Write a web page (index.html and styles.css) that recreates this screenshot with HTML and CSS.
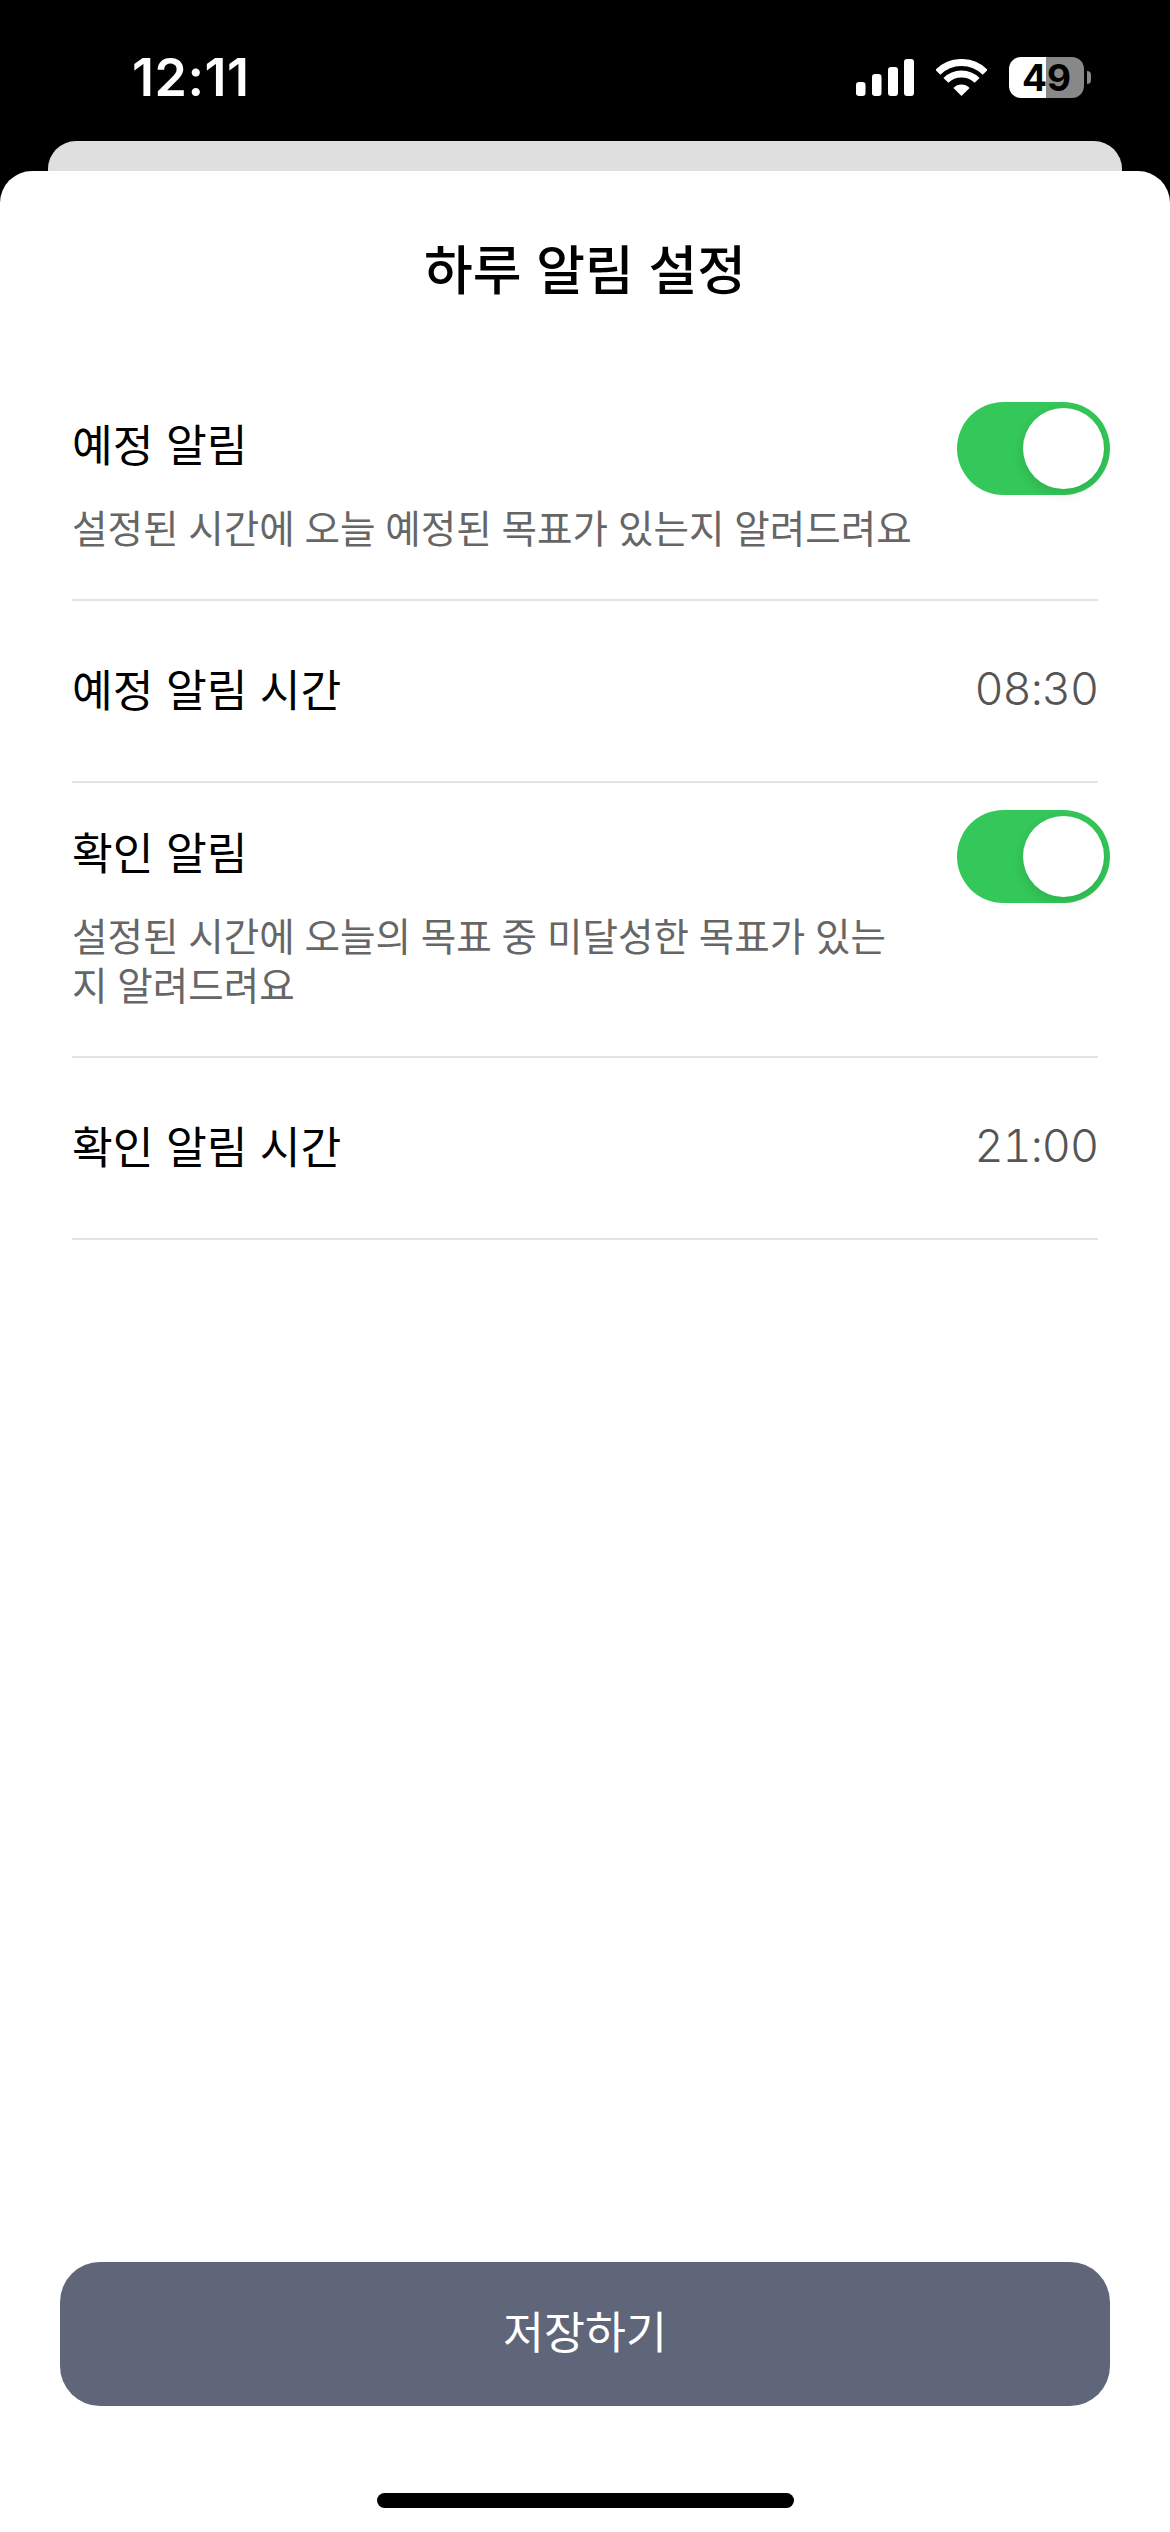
FILE: index.html
```html
<!DOCTYPE html>
<html lang="ko">
<head>
  <meta charset="UTF-8">
  <meta name="viewport" content="width=device-width, initial-scale=1.0">
  <title>하루 알림 설정</title>
  <link rel="stylesheet" href="styles.css">
</head>
<body>
  <!-- Status bar -->
  <div class="status-bar">
    <span class="clock">12:11</span>
    <div class="status-icons">
      <svg class="signal" width="58" height="37" viewBox="0 0 58 37" fill="#fff">
        <rect x="0" y="23" width="9.5" height="14" rx="3"/>
        <rect x="16" y="15" width="9.5" height="22" rx="3"/>
        <rect x="32" y="8" width="10" height="29" rx="3"/>
        <rect x="48" y="0" width="10" height="37" rx="3"/>
      </svg>
      <svg class="wifi" width="51" height="37" viewBox="0 0 51 37" fill="none" stroke="#fff">
        <path d="M1.8 13.3A33.5 33.5 0 0 1 49.2 13.3" stroke-width="7"/>
        <path d="M9.9 21.4A22 22 0 0 1 41.1 21.4" stroke-width="7"/>
        <path d="M25.5 37L17.4 28.9A11.5 11.5 0 0 1 33.6 28.9Z" fill="#fff" stroke="none"/>
      </svg>
      <div class="battery"><span>49</span></div>
      <span class="battery-nub"></span>
    </div>
  </div>
  <div class="back-card"></div>

  <!-- Settings sheet -->
  <div class="sheet">
    <h1 class="sheet-title">하루 알림 설정</h1>
    <div class="setting-list">
      <div class="setting-row">
        <div class="setting-text">
          <div class="setting-label">예정 알림</div>
          <div class="setting-desc">설정된 시간에 오늘 예정된 목표가 있는지 알려드려요</div>
        </div>
        <label class="toggle-switch">
          <input type="checkbox" checked>
          <span class="slider"></span>
        </label>
      </div>
      <div class="time-row">
        <span class="setting-label">예정 알림 시간</span>
        <span class="time-value">08:30</span>
      </div>
      <div class="setting-row">
        <div class="setting-text">
          <div class="setting-label">확인 알림</div>
          <div class="setting-desc">설정된 시간에 오늘의 목표 중 미달성한 목표가 있는지 알려드려요</div>
        </div>
        <label class="toggle-switch">
          <input type="checkbox" checked>
          <span class="slider"></span>
        </label>
      </div>
      <div class="time-row">
        <span class="setting-label">확인 알림 시간</span>
        <span class="time-value">21:00</span>
      </div>
    </div>
    <button class="save-btn">저장하기</button>
    <div class="home-bar"></div>
  </div>
</body>
</html>
```

FILE: styles.css
```css
* {
  box-sizing: border-box;
}
body {
  font-family: "Noto Sans CJK KR", sans-serif;
  margin: 0;
  height: 100vh;
  display: flex;
  flex-direction: column;
  background: #000;
  color: #000;
  overflow: hidden;
}
.status-bar {
  height: 141px;
  flex-shrink: 0;
  display: flex;
  justify-content: space-between;
  padding: 57px 79px 0 132px;
  color: #fff;
}
.clock {
  font-family: Inter, sans-serif;
  font-size: 52px;
  font-weight: 600;
  line-height: 42px;
  letter-spacing: 0.5px;
}
.status-icons {
  display: flex;
  align-items: flex-start;
}
.signal {
  margin-top: 2px;
}
.wifi {
  margin: 2px 22px 0;
}
.battery {
  width: 75px;
  height: 41px;
  border-radius: 12px;
  background: linear-gradient(90deg, #fff 37px, #888 37px);
  color: #000;
  font-family: Inter, sans-serif;
  font-size: 37px;
  font-weight: 700;
  line-height: 41px;
  text-align: center;
}
.battery-nub {
  width: 4px;
  height: 13px;
  margin: 14px 0 0 3px;
  border-radius: 0 4px 4px 0;
  background: #888;
}
.back-card {
  height: 30px;
  flex-shrink: 0;
  margin: 0 48px;
  border-radius: 28px 28px 0 0;
  background: #dfdfdf;
}
.sheet {
  flex: 1;
  display: flex;
  flex-direction: column;
  padding-bottom: 24px;
  border-radius: 32px 32px 0 0;
  background: #fff;
}
.sheet-title {
  margin: 64px 0 76px;
  font-size: 53px;
  font-weight: 500;
  line-height: 64px;
  text-align: center;
}
.setting-list {
  margin: 0 72px;
}
.setting-row {
  display: flex;
  justify-content: space-between;
  align-items: flex-start;
  padding: 27px 0 48px;
  border-bottom: 2px solid #e4e4e4;
}
.setting-text {
  width: 846px;
  padding-top: 15px;
}
.setting-label {
  font-size: 44.3px;
  line-height: 52px;
}
.setting-desc {
  margin-top: 33px;
  font-size: 38.6px;
  line-height: 49px;
  word-spacing: -1px;
  color: #666;
  word-break: break-all;
}
.time-row {
  height: 182px;
  display: flex;
  justify-content: space-between;
  align-items: center;
  padding-bottom: 6px;
  border-bottom: 2px solid #e4e4e4;
}
.time-value {
  font-family: Inter, sans-serif;
  font-size: 45px;
  font-weight: 300;
  font-variant-numeric: tabular-nums;
  letter-spacing: -1px;
  color: #555;
}
.toggle-switch {
  position: relative;
  flex-shrink: 0;
  display: block;
  width: 153px;
  height: 93px;
  margin-right: -12px;
}
.toggle-switch input {
  display: none;
}
.slider {
  position: absolute;
  top: 0;
  left: 0;
  right: 0;
  bottom: 0;
  border-radius: 47px;
  background-color: #34c759;
}
.slider::before {
  position: absolute;
  content: "";
  width: 81px;
  height: 81px;
  top: 6px;
  right: 6px;
  border-radius: 50%;
  background-color: #fff;
  box-shadow: 0 4px 12px rgba(0, 0, 0, 0.12);
}
.save-btn {
  height: 144px;
  margin: auto 60px 0;
  padding-bottom: 10px;
  border: none;
  border-radius: 40px;
  background-color: #5f6679;
  color: #fff;
  font-family: inherit;
  font-size: 44.5px;
}
.home-bar {
  width: 417px;
  height: 15px;
  margin: 87px auto 0;
  border-radius: 8px;
  background: #000;
}
```
